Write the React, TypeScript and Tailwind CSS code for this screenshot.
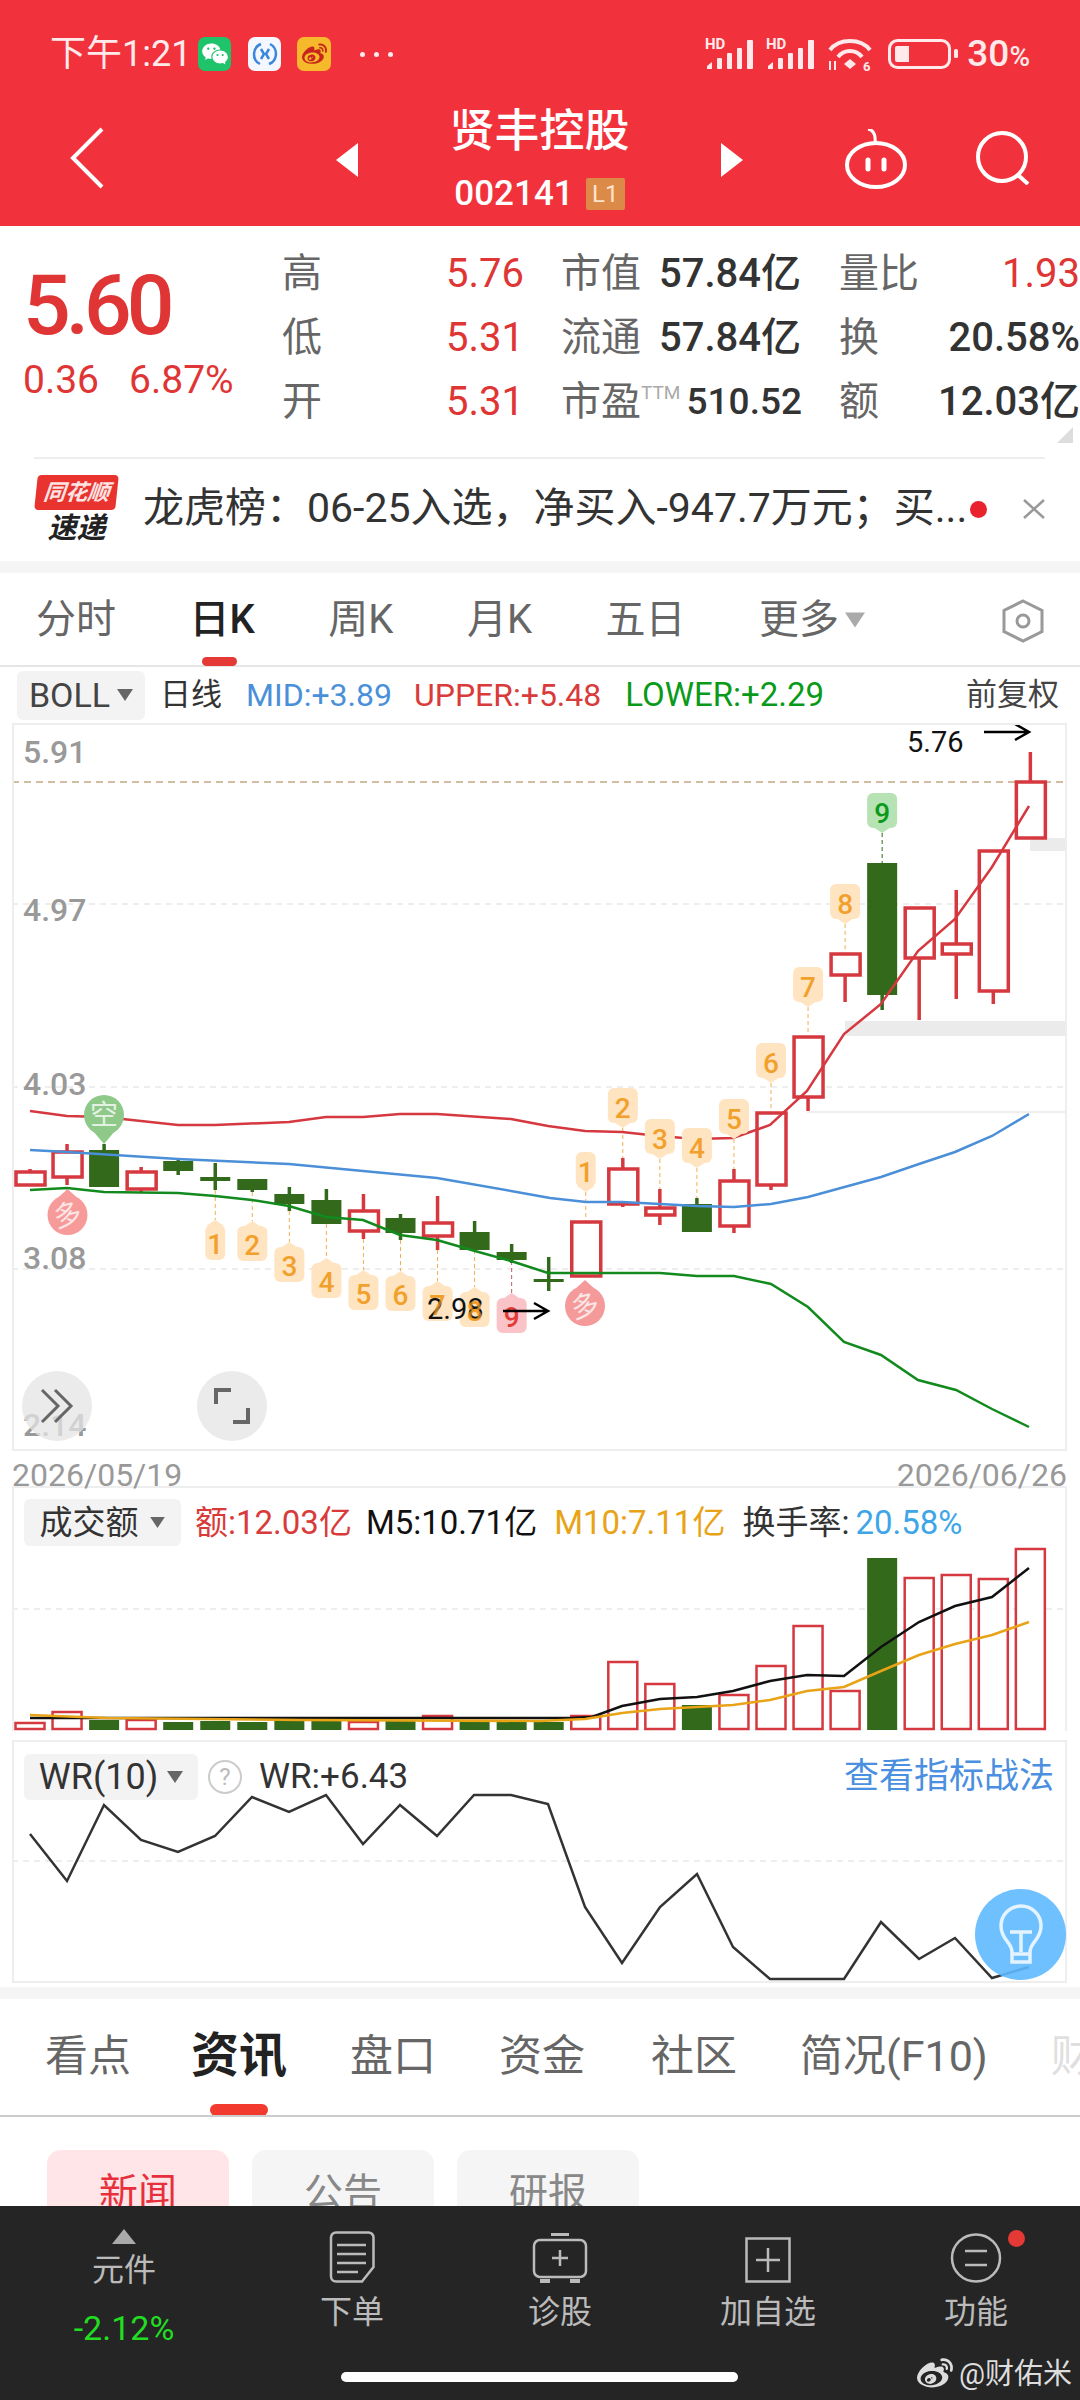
import React from 'react';
import { FaWeibo } from 'react-icons/fa';
import { RiWechatFill } from 'react-icons/ri';

const GREEN = '#33691a';
const RED = '#d6383f';

// wick top, body top, body bottom, wick bottom, is red
type Candle = [number, number, number, number, boolean];
const candles: Candle[] = [
  [1170, 1173, 1186, 1186, true],
  [1145, 1153, 1178, 1186, true],
  [1145, 1151, 1188, 1188, false],
  [1168, 1173, 1190, 1193, true],
  [1160, 1162, 1172, 1176, false],
  [1164, 1178, 1182, 1191, false],
  [1180, 1180, 1191, 1193, false],
  [1188, 1195, 1205, 1212, false],
  [1190, 1201, 1225, 1225, false],
  [1195, 1212, 1232, 1240, true],
  [1215, 1219, 1234, 1241, false],
  [1197, 1224, 1237, 1251, true],
  [1222, 1233, 1251, 1251, false],
  [1245, 1253, 1261, 1264, false],
  [1258, 1280, 1283, 1292, false],
  [1223, 1223, 1277, 1277, true],
  [1159, 1170, 1205, 1208, true],
  [1190, 1209, 1216, 1226, true],
  [1199, 1205, 1233, 1233, false],
  [1170, 1182, 1227, 1234, true],
  [1114, 1114, 1186, 1191, true],
  [1038, 1038, 1098, 1112, true],
  [955, 955, 976, 1003, true],
  [864, 864, 996, 1011, false],
  [909, 909, 959, 1021, true],
  [891, 945, 955, 1000, true],
  [852, 852, 992, 1005, true],
  [753, 783, 839, 839, true],
];

const cx = (i: number) => 30 + 37.05 * i;

const upper = '30,1112 67,1117 104,1118 178,1126 215,1126 289,1123 326,1118 363,1118 400,1115 437,1115 511,1120 548,1127 585,1132 622,1133 659,1137 696,1140 733,1139 770,1126 807,1092 844,1035 881,1005 918,952 955,920 992,868 1029,807';
const mid = '30,1151 67,1153 178,1160 289,1165 437,1179 511,1192 550,1199 586,1203 622,1203 660,1205 697,1207 734,1208 771,1205 808,1198 881,1178 919,1165 955,1153 992,1137 1029,1115';
const lower = '30,1191 67,1189 104,1193 178,1194 215,1197 252,1201 289,1207 326,1218 363,1221 400,1236 437,1241 475,1252 511,1262 548,1274 600,1274 660,1274 697,1277 734,1277 771,1285 808,1308 844,1343 881,1356 918,1381 956,1391 992,1410 1029,1428';

const volTops = [1723, 1712, 1720, 1720, 1722, 1721, 1722, 1721, 1721, 1722, 1721, 1716, 1722, 1722, 1722, 1716, 1662, 1684, 1705, 1695, 1666, 1626, 1691, 1558, 1578, 1575, 1579, 1549];
const m5 = '30,1718 200,1718 570,1718 592,1717 622,1706 660,1699 697,1697 733,1691 770,1681 807,1675 844,1676 881,1647 919,1622 955,1606 992,1597 1029,1568';
const m10 = '30,1715 107,1718 300,1720 540,1721 585,1719 622,1713 660,1709 697,1707 733,1705 770,1700 807,1691 844,1687 881,1671 919,1655 955,1644 992,1635 1029,1622';
const wr = '30,1835 67,1882 104,1806 141,1841 178,1853 215,1837 252,1798 289,1813 326,1796 363,1845 400,1806 437,1837 474,1796 511,1796 548,1805 585,1908 622,1964 660,1908 697,1875 733,1948 770,1980 844,1980 881,1923 919,1960 955,1939 992,1979 1029,1968';

const tagsBelow: [number, number, string][] = [
  [5, 1221, '1'], [6, 1222, '2'], [7, 1243, '3'], [8, 1259, '4'], [9, 1271, '5'], [10, 1272, '6'], [11, 1282, '7'], [12, 1288, '8'],
];
const tagsAbove: [number, number, string, number][] = [
  [15, 1153, '1', 1223], [16, 1089, '2', 1159], [17, 1120, '3', 1190], [18, 1129, '4', 1199], [19, 1100, '5', 1170], [20, 1044, '6', 1114], [21, 968, '7', 1038], [22, 885, '8', 955],
];

const Tag: React.FC<{ x: number; top: number; label: string; up?: boolean; w?: number; fill?: string; color?: string }> = ({ x, top, label, up, w = 30, fill = '#ffe4c2', color = '#f2a02c' }) => (
  <g>
    <rect x={x - w / 2} y={up ? top + 5 : top} width={w} height={35} rx={6} fill={fill} />
    <polygon points={up ? `${x - 9},${top + 6} ${x},${top} ${x + 9},${top + 6}` : `${x - 9},${top + 34} ${x},${top + 40} ${x + 9},${top + 34}`} fill={fill} />
    <text x={x} y={top + (up ? 34 : 30)} textAnchor="middle" fontSize={28} fontWeight={500} fill={color}>{label}</text>
  </g>
);

const Bubble: React.FC<{ x: number; y: number; label: string; fill: string; down?: boolean }> = ({ x, y, label, fill, down }) => (
  <g>
    <circle cx={x} cy={y} r={20} fill={fill} />
    <polygon points={down ? `${x - 11},${y + 16} ${x},${y + 29} ${x + 11},${y + 16}` : `${x - 11},${y - 16} ${x},${y - 26} ${x + 11},${y - 16}`} fill={fill} />
    <text x={x} y={y + 10} textAnchor="middle" fontSize={28} fill="#ffffff" fillOpacity={0.75} transform={down ? undefined : `rotate(-14 ${x} ${y})`}>{label}</text>
  </g>
);

const Arrow: React.FC<{ x1: number; x2: number; y: number }> = ({ x1, x2, y }) => (
  <path d={`M${x1} ${y}H${x2}M${x2 - 14} ${y - 8}L${x2} ${y}L${x2 - 14} ${y + 8}`} stroke="#000" strokeWidth={2.5} fill="none" />
);

const PriceChart = () => (
  <svg viewBox="14 726 1051 724" className="block h-full w-full">
    <rect x="845" y="1022" width="220" height="15" fill="#ebebeb" />
    <rect x="1030" y="839" width="35" height="13" fill="#ebebeb" />
    <line x1="807" y1="1113" x2="1065" y2="1113" stroke="#eeeeee" strokeWidth="2" />
    <line x1="12" y1="783" x2="1065" y2="783" stroke="#c4a882" strokeWidth="1.5" strokeDasharray="7 5" />
    {[905, 1088, 1270].map((y) => <line key={y} x1="12" y1={y} x2="1065" y2={y} stroke="#dddddd" strokeWidth="1" strokeDasharray="6 5" />)}
    {[['5.91', 764], ['4.97', 922], ['4.03', 1096], ['3.08', 1270], ['2.14', 1437]].map(([t, y]) => (
      <text key={t} x="23" y={y} fontSize="32" fontWeight={500} fill="#999999">{t}</text>
    ))}
    {tagsBelow.map(([i, top]) => <line key={i} x1={cx(i)} y1={candles[i][3]} x2={cx(i)} y2={top} stroke="#f0b050" strokeWidth="1" strokeDasharray="4 3" />)}
    <line x1={cx(13)} y1="1262" x2={cx(13)} y2="1294" stroke="#c0606a" strokeWidth="1" strokeDasharray="4 3" />
    {tagsAbove.map(([i, top, , end]) => <line key={i} x1={cx(i)} y1={top + 40} x2={cx(i)} y2={end} stroke="#f0b050" strokeWidth="1" strokeDasharray="4 3" />)}
    <line x1={cx(23)} y1="834" x2={cx(23)} y2="864" stroke="#33691a" strokeWidth="1" strokeDasharray="4 3" />
    {candles.map(([wt, bt, bb, wb, up], i) => {
      const x = cx(i);
      const color = up ? RED : GREEN;
      return (
        <g key={i}>
          <line x1={x} y1={wt} x2={x} y2={wb} stroke={color} strokeWidth="3.5" />
          {up ? (
            <rect x={x - 14} y={bt} width={29} height={bb - bt} fill="#ffffff" stroke={color} strokeWidth="3.5" />
          ) : (
            <rect x={x - 15} y={bt} width={30} height={bb - bt} fill={color} />
          )}
        </g>
      );
    })}
    <polyline points={upper} fill="none" stroke={RED} strokeWidth="2.5" />
    <polyline points={mid} fill="none" stroke="#4a8fd8" strokeWidth="2.5" />
    <polyline points={lower} fill="none" stroke="#128a1e" strokeWidth="2.5" />
    {tagsBelow.map(([i, top, t]) => <Tag key={i} x={cx(i)} top={top} label={t} up w={i === 5 ? 20 : 30} />)}
    <Tag x={cx(13)} top={1294} label="9" up fill="#f9c3c8" color="#e53935" />
    {tagsAbove.map(([i, top, t]) => <Tag key={i} x={cx(i)} top={top} label={t} w={i === 15 ? 20 : 30} />)}
    <Tag x={cx(23)} top={794} label="9" fill="#b6e2b4" color="#0a9a1a" />
    <Bubble x={104} y={1116} label="空" fill="#8ec98a" down />
    <Bubble x={67.5} y={1216} label="多" fill="#f79a9a" />
    <Bubble x={585} y={1307} label="多" fill="#f59a9a" />
    <text x="907" y="753" fontSize="29" fill="#111111">5.76</text>
    <Arrow x1={984} x2={1029} y={733} />
    <text x="427" y="1320" fontSize="29" fill="#111111">2.98</text>
    <text x={cx(11)} y="1316" textAnchor="middle" fontSize="28" fontWeight={500} fill="#f2a02c" fillOpacity="0.7">7</text>
    <text x={cx(12)} y="1322" textAnchor="middle" fontSize="28" fontWeight={500} fill="#f2a02c" fillOpacity="0.7">8</text>
    <Arrow x1={503} x2={548} y={1312} />
  </svg>
);

const VolumeChart = () => (
  <svg viewBox="14 1489 1051 241" className="block h-full w-full">
    <line x1="12" y1="1609" x2="1065" y2="1609" stroke="#dddddd" strokeWidth="1" strokeDasharray="6 5" />
    {volTops.map((top, i) => {
      const up = candles[i][4];
      return up ? (
        <rect key={i} x={cx(i) - 14.5} y={top} width={29} height={1729 - top} fill="#ffffff" stroke={RED} strokeWidth="2.5" />
      ) : (
        <rect key={i} x={cx(i) - 15} y={top} width={30} height={1730 - top} fill={GREEN} />
      );
    })}
    <polyline points={m5} fill="none" stroke="#111111" strokeWidth="2.5" />
    <polyline points={m10} fill="none" stroke="#e8a317" strokeWidth="2.5" />
  </svg>
);

const WrChart = () => (
  <svg viewBox="14 1743 1051 239" className="block h-full w-full">
    <line x1="12" y1="1862" x2="1065" y2="1862" stroke="#dddddd" strokeWidth="1" strokeDasharray="6 5" />
    <polyline points={wr} fill="none" stroke="#333333" strokeWidth="2.5" />
  </svg>
);

const Caret: React.FC<{ className?: string }> = ({ className }) => (
  <svg viewBox="0 0 16 12" className={className}><polygon points="0,0 16,0 8,12" fill="currentColor" /></svg>
);

const Signal = () => (
  <svg viewBox="0 0 49 32" className="h-[32px] w-[49px] overflow-visible" fill="#ffe9ea">
    <text x="0" y="11" fontSize="15" fontWeight={700}>HD</text>
    <path d="M2 31V28L7 24V31Z" />
    <rect x="12" y="20" width="5" height="11" rx="1" />
    <rect x="22" y="15" width="5" height="16" rx="1" />
    <rect x="32" y="10" width="5" height="21" rx="1" />
    <rect x="42" y="2" width="6" height="29" rx="1" />
  </svg>
);

const DocIcon = () => (
  <svg viewBox="0 0 46 52" className="h-[52px] w-[46px]" fill="none" stroke="#bbbbbb" strokeWidth="2.5">
    <path d="M7 1.5H39a5 5 0 0 1 5.500 5V36L33 50.500H7a5 5 0 0 1-5-5V6.500a5 5 0 0 1 5-5Z" />
    <path d="M8 14H37M8 23H37M8 32H37M8 41H29" />
  </svg>
);

const BoxIcon = () => (
  <svg viewBox="0 0 56 50" className="h-[50px] w-[56px]" fill="none" stroke="#bbbbbb" strokeWidth="2.5">
    <path d="M19 1.500H37" strokeWidth="3" />
    <rect x="2" y="7" width="52" height="37" rx="6" />
    <path d="M28 17V33M20 25H36" />
    <path d="M8 48H18M38 48H48" strokeWidth="4" />
  </svg>
);

const AddIcon = () => (
  <svg viewBox="0 0 46 46" className="h-[46px] w-[46px]" fill="none" stroke="#bbbbbb" strokeWidth="2.5">
    <rect x="1.500" y="1.500" width="43" height="43" />
    <path d="M23 11V35M11 23H35" />
  </svg>
);

const MenuIcon = () => (
  <svg viewBox="0 0 52 50" className="h-[50px] w-[52px]" fill="none" stroke="#bbbbbb" strokeWidth="2.5">
    <ellipse cx="26" cy="25" rx="24" ry="23.500" />
    <path d="M15 18H37M15 32H37" />
  </svg>
);

const BottomItem: React.FC<{ icon: React.ReactNode; label: string; badge?: boolean }> = ({ icon, label, badge }) => (
  <div className="relative flex w-[208px] flex-col items-center">
    <div className="flex h-[54px] items-end justify-center">{icon}</div>
    <span className="mt-[10px] text-[32px] leading-[38px] text-[#bbbbbb]">{label}</span>
    {badge && <span className="absolute left-[136px] top-[1px] h-[17px] w-[17px] rounded-full bg-[#e53935]" />}
  </div>
);

export default function App() {
  return (
    <div className="flex h-[2400px] w-[1080px] flex-col overflow-hidden bg-white font-[Roboto,'Noto_Sans_CJK_SC',sans-serif]">
      {/* header */}
      <header className="h-[226px] shrink-0 bg-[#f1323c] text-white">
        <div className="flex h-[108px] items-center pl-[50px] pr-[50px]">
          <span className="w-[148px] whitespace-nowrap text-[36px] text-[#ffe9ea]">下午1:21</span>
          <span className="flex h-[34px] w-[33px] items-center justify-center rounded-[7px] bg-[#1fc36a]"><RiWechatFill className="h-[28px] w-[28px]" /></span>
          <span className="ml-[17px] flex h-[34px] w-[33px] items-center justify-center rounded-[7px] bg-[#f4f7fd]">
            <svg viewBox="0 0 28 28" className="h-[28px] w-[28px]" fill="none" stroke="#3a86dc" strokeWidth="2.500">
              <path d="M9 24A11 11 0 0 1 10 4M19 4A11 11 0 0 1 18 24M10 19l3-5-3-5M18 9l-3 5 3 5" />
            </svg>
          </span>
          <span className="ml-[16px] flex h-[34px] w-[34px] items-center justify-center rounded-[7px] bg-[#f6b92b] text-[#c8261c]"><FaWeibo className="h-[25px] w-[25px]" /></span>
          <span className="ml-[29px] flex gap-[9px]">
            <i className="h-[5px] w-[5px] rounded-full bg-white/90" />
            <i className="h-[5px] w-[5px] rounded-full bg-white/90" />
            <i className="h-[5px] w-[5px] rounded-full bg-white/90" />
          </span>
          <div className="ml-auto flex items-center">
            <Signal />
            <span className="ml-[12px]"><Signal /></span>
            <svg viewBox="0 0 46 34" className="ml-[12px] h-[34px] w-[46px] overflow-visible" fill="none" stroke="#ffe9ea" strokeWidth="4">
              <path d="M3 13C12 1 34 1 43 13M11 20C17 12 29 12 35 20" />
              <path d="M17 27L23 22L29 27L23 32Z" fill="#ffe9ea" stroke="none" />
              <path d="M3 33V24M8 24V33" strokeWidth="2" />
              <text x="36" y="34" fontSize="13" fontWeight={700} fill="#ffe9ea" stroke="none">6</text>
            </svg>
            <svg viewBox="0 0 70 30" className="ml-[15px] h-[30px] w-[70px]">
              <rect x="1.500" y="1.500" width="60" height="27" rx="8" fill="none" stroke="#ffe9ea" strokeWidth="3" />
              <path d="M7 9a2 2 0 0 1 2-2H21V23H9a2 2 0 0 1-2-2Z" fill="#ffe9ea" />
              <rect x="66" y="10" width="4" height="9" rx="1.500" fill="#ffe9ea" />
            </svg>
            <span className="ml-[9px] whitespace-nowrap text-[37px] font-medium text-[#ffe9ea]">30<span className="text-[28px]">%</span></span>
          </div>
        </div>
        <div className="flex h-[118px] items-start">
          <svg viewBox="0 0 34 62" className="ml-[70px] mt-[19px] h-[62px] w-[34px]" fill="none" stroke="#fff" strokeWidth="4">
            <path d="M32 2L3 31L32 60" />
          </svg>
          <svg viewBox="0 0 22 34" className="ml-[232px] mt-[35px] h-[34px] w-[22px]"><polygon points="22,0 22,34 0,17" fill="#fff" /></svg>
          <div className="ml-[93px] mt-[2px] flex w-[177px] flex-col items-center">
            <span className="whitespace-nowrap text-[45px] font-medium leading-[44px]">贤丰控股</span>
            <div className="mt-[23px] flex items-center whitespace-nowrap">
              <span className="text-[35px] font-medium leading-[34px] text-white">002141</span>
              <span className="ml-[12px] flex h-[32px] w-[39px] items-center justify-center rounded-[2px] bg-[#dc8a47] text-[24px] leading-none text-[#ffe3cc]">L1</span>
            </div>
          </div>
          <svg viewBox="0 0 22 34" className="ml-[93px] mt-[35px] h-[34px] w-[22px]"><polygon points="0,0 0,34 22,17" fill="#fff" /></svg>
          <svg viewBox="0 0 64 60" className="ml-[101px] mt-[21px] h-[60px] w-[64px]" fill="none" stroke="#fff" strokeWidth="4">
            <path d="M24 0C29 1 32 5 31 14" strokeWidth="3" />
            <ellipse cx="32" cy="36" rx="29" ry="22" />
            <path d="M24 31V40M40 31V40" strokeWidth="5" strokeLinecap="round" />
          </svg>
          <svg viewBox="0 0 56 54" className="ml-[67px] mt-[23px] h-[54px] w-[56px]" fill="none" stroke="#fff" strokeWidth="4">
            <circle cx="27" cy="26" r="24" />
            <path d="M43 44L53 53" />
          </svg>
        </div>
      </header>

      {/* quote */}
      <section className="relative h-[335px] shrink-0">
        <div className="flex h-[231px]">
          <div className="w-[282px] pl-[23px] pt-[42px] text-[#e03535]">
            <div className="text-[84px] font-medium leading-[76px] tracking-[-5px]">5.60</div>
            <div className="mt-[14px] flex whitespace-nowrap text-[39px] leading-[44px]"><span>0.36</span><span className="ml-[30px]">6.87%</span></div>
          </div>
          <div className="grid flex-1 grid-cols-[164px_115px_278px_241px] auto-rows-[64px] pt-[16px] text-[40px] leading-[64px]">
            <span className="text-[#666666]">高</span>
            <span className="text-[#e03535]">5.76</span>
            <span className="flex justify-between whitespace-nowrap pr-[38px] text-[#666666]">市值<b className="font-medium text-[#333333]">57.84亿</b></span>
            <span className="flex justify-between whitespace-nowrap text-[#666666]">量比<span className="text-[#e03535]">1.93</span></span>
            <span className="text-[#666666]">低</span>
            <span className="text-[#e03535]">5.31</span>
            <span className="flex justify-between whitespace-nowrap pr-[38px] text-[#666666]">流通<b className="font-medium text-[#333333]">57.84亿</b></span>
            <span className="flex justify-between whitespace-nowrap text-[#666666]">换<b className="font-medium text-[#333333]">20.58%</b></span>
            <span className="text-[#666666]">开</span>
            <span className="text-[#e03535]">5.31</span>
            <span className="flex items-center justify-between whitespace-nowrap pr-[37px] text-[#666666]"><span className="flex">市盈<sup className="mt-[22px] text-[19px] leading-none text-[#aaaaaa]">TTM</sup></span><b className="text-[37px] font-medium text-[#333333]">510.52</b></span>
            <span className="flex justify-between whitespace-nowrap text-[#666666]">额<b className="font-medium text-[#333333]">12.03亿</b></span>
          </div>
        </div>
        <svg viewBox="0 0 16 16" className="absolute right-[7px] top-[201px] h-[16px] w-[16px]"><polygon points="16,0 16,16 0,16" fill="#dddddd" /></svg>
        <div className="mx-[34px] h-[2px] w-[1011px] bg-[#eeeeee]" />
        <div className="flex h-[100px] items-center pl-[36px]">
          <div className="flex w-[81px] flex-col items-center">
            <span className="flex h-[35px] w-[81px] -skew-x-6 items-center justify-center rounded-[4px] bg-[#e8332f] text-[22px] font-bold italic leading-none text-[#ffe3e3]">同花顺</span>
            <span className="mt-[3px] text-[29px] font-bold italic leading-[30px] text-[#222222]">速递</span>
          </div>
          <span className="ml-[26px] w-[827px] whitespace-nowrap text-[41px] text-[#333333]">龙虎榜：06-25入选，净买入-947.7万元；买...</span>
          <span className="h-[17px] w-[17px] rounded-full bg-[#e8232d]" />
          <svg viewBox="0 0 22 20" className="ml-[36px] h-[20px] w-[22px]" fill="none" stroke="#999999" strokeWidth="2.500"><path d="M1 1L21 19M21 1L1 19" /></svg>
        </div>
      </section>
      <div className="h-[12px] shrink-0 bg-[#f5f5f5]" />

      {/* period tabs */}
      <nav className="relative flex h-[94px] shrink-0 items-start gap-[73.5px] border-b-2 border-[#e5e5e5] pl-[36px] pt-[24px] text-[40px] leading-[46px] text-[#666666]">
        <span>分时</span>
        <span className="relative font-medium text-[#222222]">日K<i className="absolute left-[12px] top-[60px] h-[9px] w-[35px] rounded-full bg-[#e53935]" /></span>
        <span>周K</span>
        <span>月K</span>
        <span>五日</span>
        <span className="flex items-center">更多<Caret className="ml-[6px] h-[16px] w-[20px] text-[#aaaaaa]" /></span>
        <svg viewBox="0 0 46 44" className="absolute left-[1000px] top-[26px] h-[44px] w-[46px]" fill="none" stroke="#999999" strokeWidth="3">
          <path d="M23 2L42 11.500V32.500L23 42L4 32.500V11.500Z" />
          <circle cx="23" cy="22" r="6" />
        </svg>
      </nav>

      {/* indicator legend */}
      <div className="flex h-[56px] shrink-0 items-center whitespace-nowrap pl-[17px] pr-[21px] text-[32px]">
        <span className="flex h-[49px] w-[128px] items-center justify-center gap-[7px] rounded-[6px] bg-[#f3f3f3] text-[34px] text-[#444444]">BOLL<Caret className="h-[12px] w-[16px] text-[#666666]" /></span>
        <span className="ml-[15px] text-[31px] text-[#333333]">日线</span>
        <span className="ml-[24px] text-[#4a90d9]">MID:+3.89</span>
        <span className="ml-[22px] text-[#d93a3a]">UPPER:+5.48</span>
        <span className="ml-[24px] text-[33px] text-[#0a9a1a]">LOWER:+2.29</span>
        <span className="ml-auto text-[31px] text-[#444444]">前复权</span>
      </div>

      {/* price chart */}
      <div className="relative ml-[12px] h-[728px] w-[1055px] shrink-0 border-2 border-[#eeeeee]">
        <PriceChart />
        <button className="absolute left-[8px] top-[646px] flex h-[70px] w-[70px] items-center justify-center rounded-full bg-[#e4e4e4]/75">
          <svg viewBox="0 0 34 36" className="h-[36px] w-[34px]" fill="none" stroke="#666666" strokeWidth="3"><path d="M2 2L18 18L2 34M15 2L31 18L15 34" /></svg>
        </button>
        <button className="absolute left-[183px] top-[646px] flex h-[70px] w-[70px] items-center justify-center rounded-full bg-[#e4e4e4]/75">
          <svg viewBox="0 0 36 36" className="h-[36px] w-[36px]" fill="none" stroke="#666666" strokeWidth="4"><path d="M2 16V2H17M34 20V34H19" /></svg>
        </button>
      </div>

      {/* dates */}
      <div className="relative z-10 flex h-[35px] shrink-0 items-start justify-between pl-[12px] pr-[13px] pt-[8px] text-[32px] leading-[32px] text-[#999999]">
        <span>2026/05/19</span>
        <span>2026/06/26</span>
      </div>

      {/* turnover */}
      <div className="relative ml-[12px] h-[245px] w-[1055px] shrink-0 border-x-2 border-t-2 border-[#eeeeee]">
        <div className="absolute inset-0"><VolumeChart /></div>
        <div className="absolute left-[10px] top-[10px] flex items-center whitespace-nowrap text-[33px]">
          <span className="flex h-[47px] w-[157px] items-center justify-center gap-[10px] rounded-[6px] bg-[#f3f3f3] text-[33px] text-[#333333]">成交额<Caret className="h-[11px] w-[17px] text-[#666666]" /></span>
          <span className="ml-[14px] text-[#d93a3a]">额:12.03亿</span>
          <span className="ml-[14px] text-[#111111]">M5:10.71亿</span>
          <span className="ml-[17px] text-[#e8a317]">M10:7.11亿</span>
          <span className="ml-[17px] text-[#333333]">换手率:<span className="ml-[6px] text-[#3ea6e8]">20.58%</span></span>
        </div>
      </div>
      <div className="h-[9px] shrink-0" />

      {/* WR */}
      <div className="relative ml-[12px] h-[243px] w-[1055px] shrink-0 border-2 border-[#eeeeee]">
        <div className="absolute inset-0"><WrChart /></div>
        <div className="absolute inset-x-0 top-[9px] flex items-center whitespace-nowrap text-[35px] text-[#333333]">
          <span className="ml-[10px] flex h-[46px] w-[174px] items-center justify-center gap-[9px] rounded-[6px] bg-[#f3f3f3] text-[36px]">WR(10)<Caret className="h-[12px] w-[16px] text-[#666666]" /></span>
          <span className="ml-[10px] flex h-[34px] w-[34px] items-center justify-center rounded-full border-2 border-[#cccccc] text-[24px] leading-none text-[#bbbbbb]">?</span>
          <span className="ml-[17px]">WR:+6.43</span>
          <span className="ml-auto mr-[11px] text-[#4a8fe0]">查看指标战法</span>
        </div>
        <span className="absolute left-[961px] top-[147px] flex h-[91px] w-[91px] items-center justify-center rounded-full bg-[#5fb9ff]/90">
          <svg viewBox="0 0 44 62" className="h-[62px] w-[44px]" fill="none" stroke="#e3f3ff" strokeWidth="3.500">
            <path d="M13 48C13 38 2 36 2 22a20 20 0 0 1 40 0C42 36 31 38 31 48V58H13Z" />
            <path d="M11 28H33M22 28V48M13 50H31" />
          </svg>
        </span>
      </div>
      <div className="mt-[4px] h-[12px] shrink-0 bg-[#f5f5f5]" />

      {/* detail tabs */}
      <nav className="flex h-[118px] shrink-0 items-start gap-[63px] overflow-hidden whitespace-nowrap border-b-2 border-[#cccccc] pl-[45px] pt-[31px] text-[43px] leading-[52px] text-[#666666]">
        <span>看点</span>
        <span className="relative ml-[-3px] text-[48px] font-bold text-[#222222]">资讯<i className="absolute left-[19px] top-[74px] h-[12px] w-[58px] rounded-full bg-[#f33a2f]" /></span>
        <span>盘口</span>
        <span>资金</span>
        <span className="ml-[3px]">社区</span>
        <span>简况(F10)</span>
        <span className="opacity-20">财务</span>
      </nav>

      <div className="flex h-[89px] shrink-0 gap-[23px] overflow-hidden pl-[47px] pt-[33px] text-[39px]">
        <span className="flex h-[90px] w-[182px] justify-center rounded-t-[14px] bg-[#ffe5e8] pt-[14px] text-[#e8303c]">新闻</span>
        <span className="flex h-[90px] w-[182px] justify-center rounded-t-[14px] bg-[#f5f5f5] pt-[14px] text-[#888888]">公告</span>
        <span className="flex h-[90px] w-[182px] justify-center rounded-t-[14px] bg-[#f5f5f5] pt-[14px] text-[#888888]">研报</span>
      </div>

      {/* bottom bar */}
      <footer className="relative flex-1 bg-[#252525]">
        <div className="flex pt-[23px]">
          <div className="flex w-[248px] flex-col items-center">
            <svg viewBox="0 0 24 15" className="h-[15px] w-[24px]"><polygon points="12,0 24,15 0,15" fill="#aaaaaa" /></svg>
            <span className="mt-[7px] text-[32px] leading-[38px] text-[#bbbbbb]">元件</span>
            <span className="mt-[19px] text-[34px] leading-[40px] text-[#22dd22]">-2.12%</span>
          </div>
          <div className="flex">
            <BottomItem icon={<DocIcon />} label="下单" />
            <BottomItem icon={<BoxIcon />} label="诊股" />
            <BottomItem icon={<AddIcon />} label="加自选" />
            <BottomItem icon={<MenuIcon />} label="功能" badge />
          </div>
        </div>
        <div className="absolute left-[341px] top-[166px] h-[10px] w-[397px] rounded-full bg-white" />
        <div className="absolute left-[914px] top-[150px] flex items-center whitespace-nowrap text-[#dddddd]">
          <FaWeibo className="h-[36px] w-[42px]" />
          <span className="ml-[3px] text-[29px] leading-none">@财佑米</span>
        </div>
      </footer>
    </div>
  );
}
